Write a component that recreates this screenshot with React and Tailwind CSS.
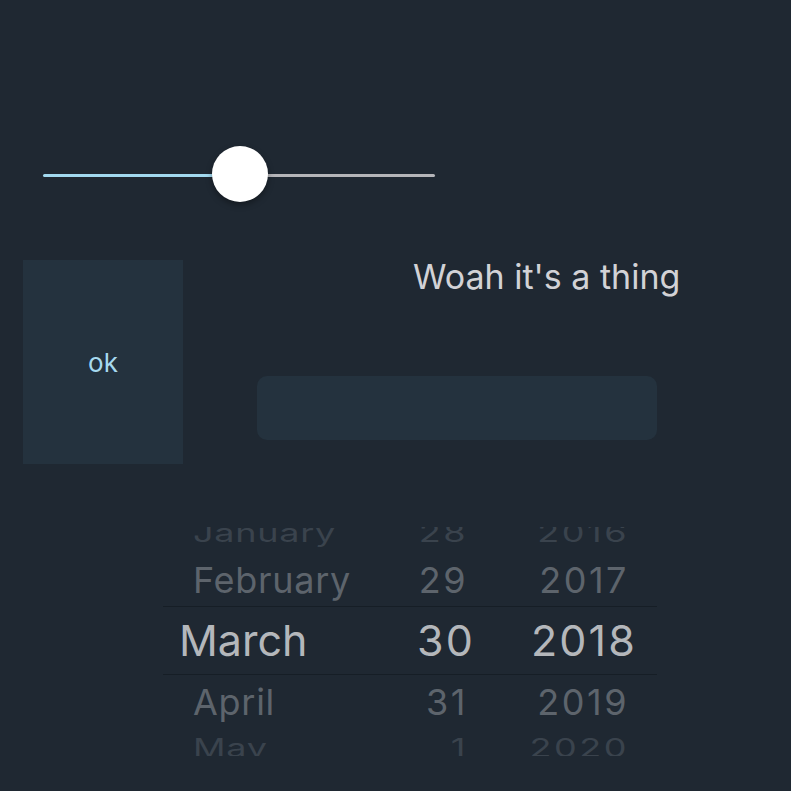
import React from "react";

const rows = [
  { m: "January", d: "28", y: "2016", kind: "top", h: "h-[19px]", pad: "" },
  { m: "February", d: "29", y: "2017", kind: "near", h: "h-[60px]", pad: "pt-[8px]" },
  { m: "March", d: "30", y: "2018", kind: "sel", h: "h-[69px]", pad: "" },
  { m: "April", d: "31", y: "2019", kind: "near", h: "h-[53px]", pad: "" },
  { m: "May", d: "1", y: "2020", kind: "bottom", h: "h-[28px]", pad: "pt-[12px]" },
];

function PickerRow({ r }) {
  if (r.kind === "sel") {
    return (
      <div className={`${r.h} shrink-0 border-y border-[#161e26] grid grid-cols-[232px_80px_162px] grid-rows-[minmax(0,1fr)] items-center text-[43px] leading-none text-[#b4b7bb]`}>
        <div className="pl-[16px]">{r.m}</div>
        <div className="text-right tracking-[0.05em]">{r.d}</div>
        <div className="text-right tracking-[0.05em]">{r.y}</div>
      </div>
    );
  }
  const color = r.kind === "near" ? "text-[#5d646c]" : "text-[#3a434d]";
  const squish =
    r.kind === "top"
      ? "scale-y-[0.7] -translate-y-[4px]"
      : r.kind === "bottom"
      ? "scale-y-[0.7]"
      : "";
  return (
    <div className={`${r.h} ${r.pad} shrink-0 grid grid-cols-[225px_80px_161px] grid-rows-[minmax(0,1fr)] items-center text-[36px] leading-none ${color}`}>
      <div className={`pl-[30px] tracking-[0.02em] ${squish}`}>{r.m}</div>
      <div className={`text-right tracking-[0.07em] ${squish}`}>{r.d}</div>
      <div className={`text-right tracking-[0.07em] ${squish}`}>{r.y}</div>
    </div>
  );
}

export default function App() {
  return (
    <div className="min-h-[791px] w-full overflow-hidden bg-[#1f2832] font-['Inter',sans-serif]">
      {/* slider */}
      <div className="pt-[146px] pl-[43px]">
        <div className="relative h-[56px] w-[392px]">
          <div className="absolute left-0 top-[28px] h-[3px] w-[197px] rounded-l-full bg-[#a2d9ef]" />
          <div className="absolute left-[197px] right-0 top-[28px] h-[3px] rounded-r-full bg-[#b5b5b9]" />
          <div className="absolute left-[169px] top-0 h-[56px] w-[56px] rounded-full bg-white shadow-[0_3px_6px_rgba(0,0,0,0.35)]" />
        </div>
      </div>

      {/* middle row */}
      <div className="mt-[58px] flex">
        <div className="ml-[23px] flex h-[204px] w-[160px] shrink-0 items-center justify-center bg-[#24323e] text-[26px] text-[#a6d9ef]">
          ok
        </div>
        <div className="flex flex-col">
          <div className="ml-[230px] whitespace-nowrap text-[34px] leading-none text-[#d2d2d6]">
            Woah it's a thing
          </div>
          <div className="ml-[74px] mt-[82px] h-[64px] w-[400px] rounded-[10px] bg-[#24323e]" />
        </div>
      </div>

      {/* picker */}
      <div className="ml-[163px] mt-[63px] flex h-[229px] w-[494px] flex-col overflow-hidden">
        {rows.map((r) => (
          <PickerRow key={r.m} r={r} />
        ))}
      </div>
    </div>
  );
}
